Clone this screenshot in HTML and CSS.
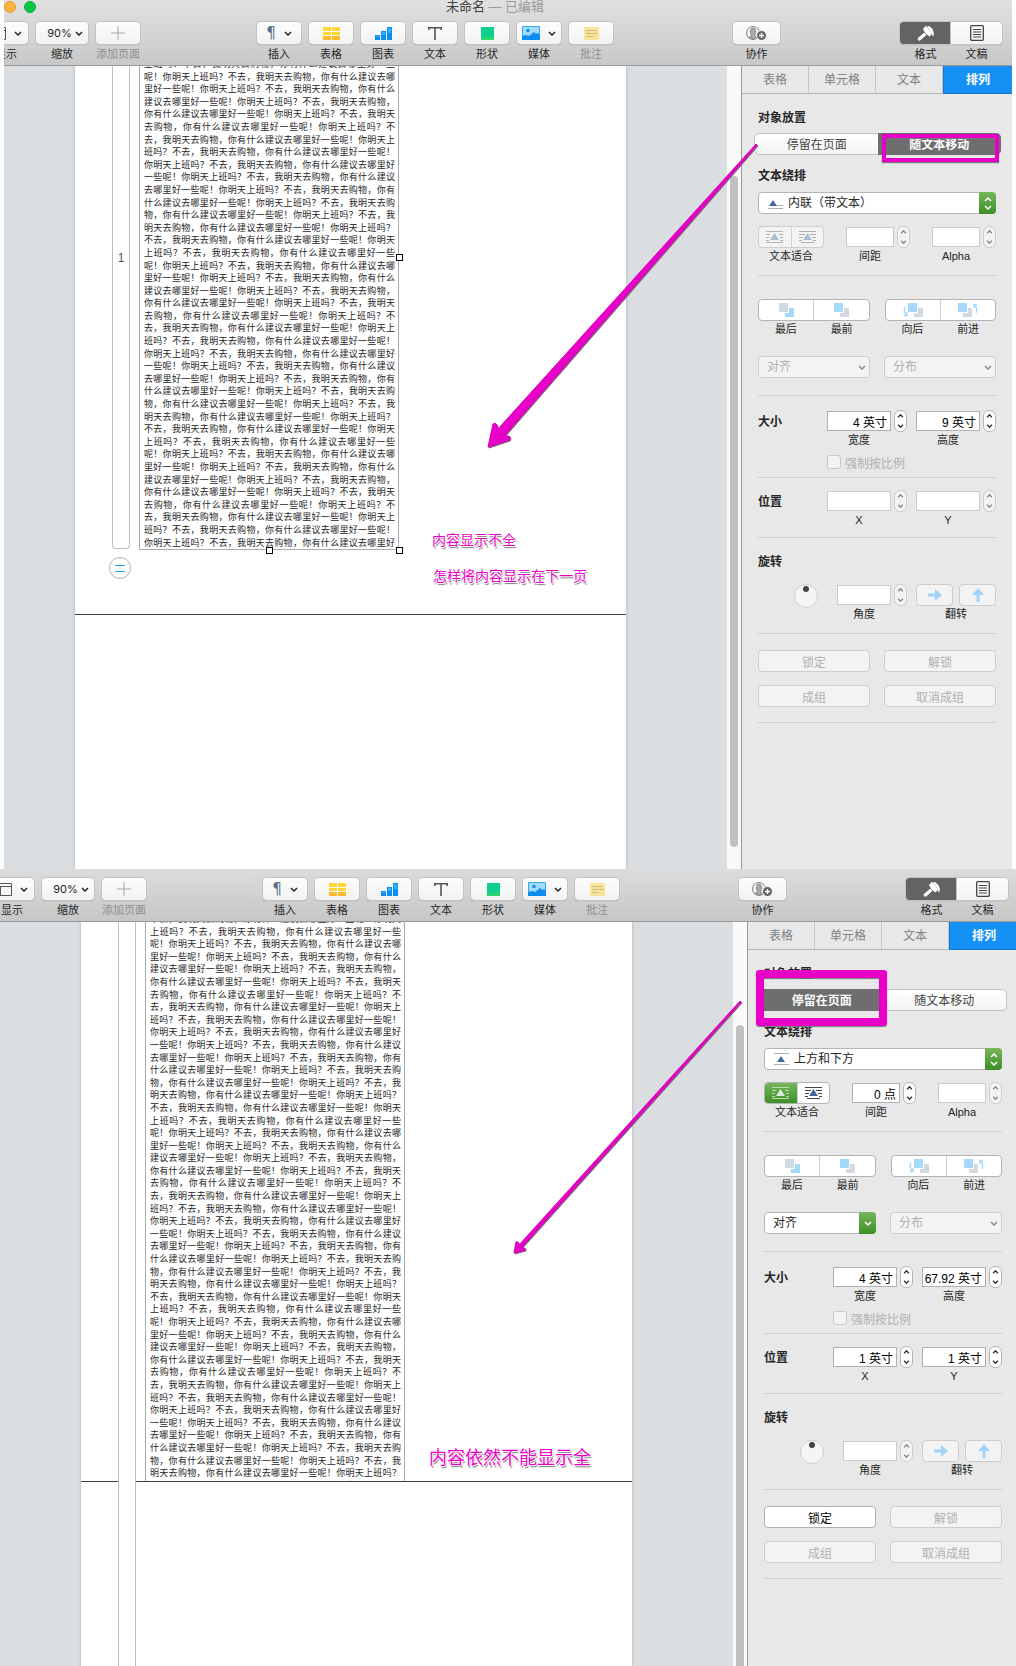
FILE: index.html
```html
<!DOCTYPE html>
<html lang="zh-CN">
<head>
    <meta charset="UTF-8">
    <meta name="viewport" content="width=device-width, initial-scale=1.0">
    <title>未命名</title>
    <link rel="stylesheet" href="styles.css">
</head>
<body>
    <section class="window window-inline">
        <header class="titlebar">
            <span class="light light-min"></span>
            <span class="light light-zoom"></span>
            <h1 class="title">未命名 <span>— 已编辑</span></h1>
        </header>
        <div class="toolbar"></div>
        <div class="workspace">
            <main class="canvas">
                <div class="sheet">
                    <div class="row-header"><span>1</span></div>
                    <div class="page">
                        <div class="cell">
                            <p class="cell-text" data-start="3"></p>
                            <i class="handle handle-right"></i>
                            <i class="handle handle-bottom"></i>
                            <i class="handle handle-corner"></i>
                        </div>
                    </div>
                    <button class="add-row" aria-label="添加行"></button>
                    <p class="note note-first">内容显示不全</p>
                    <p class="note note-second">怎样将内容显示在下一页</p>
                </div>
            </main>
            <div class="scrollbar"><div class="thumb"></div></div>
            <aside class="inspector" data-mode="inline"></aside>
        </div>
        <svg class="arrow arrow-inline" width="278" height="312" viewBox="484 140 278 312">
            <path d="M756 144L497 430L497 425Q495 422 493 424L488 447L509 440Q511 438 509 436L504 436L757 145Z"/>
        </svg>
    </section>

    <section class="window window-page">
        <div class="toolbar"></div>
        <div class="workspace">
            <main class="canvas">
                <div class="sheet">
                    <div class="row-header"></div>
                    <div class="page">
                        <div class="cell">
                            <p class="cell-text" data-start="7"></p>
                        </div>
                    </div>
                    <p class="note note-large">内容依然不能显示全</p>
                </div>
            </main>
            <div class="scrollbar"><div class="thumb"></div></div>
            <aside class="inspector" data-mode="page"></aside>
        </div>
        <svg class="arrow arrow-page" width="236" height="260" viewBox="510 998 236 260">
            <path d="M740 1001L519 1245L518 1242L516 1242L514 1253L525 1250L525 1248L521 1248L741 1002Z"/>
        </svg>
    </section>

    <script src="script.js"></script>
</body>
</html>
```
FILE: styles.css
```css
* {
    box-sizing: border-box;
}

body {
    margin: 0;
    height: 100vh;
    display: flex;
    flex-direction: column;
    overflow: hidden;
    background: #fff;
    color: #262626;
    font-family: "Liberation Sans", "Noto Sans CJK SC", sans-serif;
    font-size: 12px;
}

h1, h2, p {
    margin: 0;
}

button, input, select {
    font: inherit;
    color: inherit;
    margin: 0;
    padding: 0;
}

svg {
    display: block;
}

.window {
    position: relative;
    display: flex;
    flex-direction: column;
    overflow: hidden;
}

.window-inline {
    flex: 869 1 0;
    margin: 0 4px;
    background: linear-gradient(#e1e1e1, #c8c8c8 65px);
}

.window-page {
    flex: 797 1 0;
    margin-right: -2px;
    background: linear-gradient(#dcdcdc, #c6c6c6 53px);
}

/* title bar */
.titlebar {
    display: flex;
    align-items: center;
    gap: 8px;
    height: 14px;
    margin-bottom: 8px;
}

.light {
    width: 12px;
    height: 12px;
    border-radius: 50%;
}

.light-min {
    background: #fdb43d;
    border: 1px solid #e39c2d;
}

.light-zoom {
    background: #0fc544;
    border: 1px solid #0aa838;
}

.title {
    flex: 1;
    padding-right: 66px;
    text-align: center;
    font-size: 13px;
    font-weight: 400;
    line-height: 14px;
    color: #404040;
}

.title span {
    color: #999;
}

/* toolbar */
.toolbar {
    display: flex;
    padding-right: 10px;
    height: 44px;
    border-bottom: 1px solid #9a9a9a;
}

.window-page .toolbar {
    height: 53px;
    padding-top: 9px;
}

.tool-group {
    display: flex;
    gap: 8px;
}

.tools-view {
    margin-left: -20px;
}

.window-page .tools-view {
    margin-left: -10px;
}

.tools-insert {
    margin-left: 117px;
}

.tools-share {
    margin: 0 auto;
}

.tools-panel {
    gap: 0;
}

.tool {
    display: flex;
    flex-direction: column;
    align-items: center;
    width: 44px;
    padding: 0;
    border: 0;
    background: none;
    font-size: 11px;
    line-height: 14px;
    white-space: nowrap;
}

.tool-face {
    display: flex;
    align-items: center;
    justify-content: center;
    gap: 8px;
    width: 100%;
    height: 22px;
    margin-bottom: 3px;
    background: linear-gradient(#fdfdfd, #f2f2f2);
    border-radius: 4px;
    box-shadow: 0 0 0 1px #c3c3c3, 0 1px 1px #999;
}

.tool-zoom {
    width: 52px;
}

.tool-zoom .tool-face {
    gap: 3px;
    padding-left: 6px;
    font-family: Inter, sans-serif;
    font-size: 11px;
}

.tool-share {
    width: 47px;
}

.tool:disabled {
    color: #8e8e8e;
}

.tool:disabled svg {
    opacity: 0.5;
}

.tools-panel .tool {
    width: 51px;
}

.tools-panel .tool-face {
    border-radius: 0 4px 4px 0;
}

.tools-panel .tool-on .tool-face {
    background: #636363;
    border-radius: 4px 0 0 4px;
}

.pilcrow {
    font-family: "DejaVu Sans", sans-serif;
    font-size: 15px;
    color: #5c7188;
}

/* document */
.workspace {
    flex: 1;
    min-height: 0;
    display: flex;
}

.canvas {
    flex: 1;
    display: flex;
    overflow: hidden;
    padding: 0 101px 0 71px;
    background: #dadee1;
}

.window-page .canvas {
    padding-left: 81px;
}

.sheet {
    position: relative;
    flex: 1;
    background: #fff;
    box-shadow: 0 0 3px #a9adb0;
}

.page {
    display: flex;
    padding: 0 0 64px 64px;
    border-bottom: 1px solid #3c3c3c;
}

.window-page .page {
    padding-bottom: 0;
}

.row-header {
    position: absolute;
    z-index: 1;
    left: 37px;
    top: 0;
    width: 18px;
    height: 483px;
    display: flex;
    align-items: center;
    justify-content: center;
    padding-bottom: 98px;
    border: 1px solid #bdbdbd;
    border-top: 0;
    border-radius: 0 0 4px 4px;
    background: #fff;
    color: #555;
}

.window-page .row-header {
    height: auto;
    bottom: 0;
    border-bottom: 0;
    border-radius: 0;
}

.cell {
    position: relative;
    width: 260px;
    height: 484px;
    padding: 0 3px 0 4px;
    border: 1px solid #ababab;
    border-top: 0;
}

.window-page .cell {
    height: 559px;
    border-bottom: 0;
}

/* scrolled part of a line up under the toolbar */
.cell-text {
    height: calc(100% + 8px);
    margin-top: -8px;
    overflow: hidden;
    font-family: "Noto Sans CJK SC", sans-serif;
    font-size: 9px;
    line-height: 1.4;
    text-align: justify;
    text-spacing-trim: space-all;
}

.window-page .cell-text {
    height: calc(100% + 9px);
    margin-top: -9px;
}

.handle {
    position: absolute;
    width: 7px;
    height: 7px;
    border: 1px solid #000;
    background: #fff;
}

.handle-right {
    right: -5px;
    top: 188px;
}

.handle-bottom {
    left: 126px;
    bottom: -5px;
}

.handle-corner {
    right: -5px;
    bottom: -5px;
}

.add-row {
    position: absolute;
    left: 34px;
    top: 491px;
    width: 22px;
    height: 22px;
    border: 1px solid #b0b0b0;
    border-radius: 50%;
    background: #fff;
}

.add-row::before {
    content: "";
    display: block;
    width: 10px;
    height: 5px;
    margin: 0 auto;
    border: solid #1e9bf5;
    border-width: 1px 0;
}

.scrollbar {
    width: 14px;
    padding: 110px 3px 22px;
    background: #fafafa;
}

.thumb {
    height: 100%;
    border-radius: 4px;
    background: #c1c1c1;
}

.window-page .scrollbar {
    padding-top: 103px;
    padding-bottom: 0;
}

.window-page .thumb {
    border-radius: 4px 4px 0 0;
}

/* inspector */
.inspector {
    width: 271px;
    border-left: 1px solid #999;
    background: #e8e8e8;
}

.tabs {
    display: flex;
    height: 28px;
}

.tab {
    width: 67px;
    padding-bottom: 2px;
    border: 0;
    border-right: 1px solid #c5c8cb;
    border-bottom: 1px solid #b4b7ba;
    background: none;
    color: #7d8285;
}

.tab-on {
    flex: 1;
    border: 1px solid #1179cf;
    border-width: 0 0 1px 1px;
    background: #1590f5;
    color: #fff;
    font-weight: 700;
}

.panel {
    padding: 15px 16px 0;
}

.heading {
    font-size: 12px;
    line-height: 18px;
    font-weight: 700;
}

.segment {
    position: relative;
    display: flex;
    height: 22px;
    margin: 6px -5px 12px -4px;
    border: 1px solid #c4c4c4;
    border-radius: 5px;
    background: linear-gradient(#fff, #f4f4f4);
}

.segment button {
    flex: 1;
    padding-bottom: 2px;
    border: 0;
    background: none;
    color: #444;
}

.segment .segment-on {
    margin: -1px;
    background: #6e6e6e;
    color: #fff;
    font-weight: 700;
}

.segment-on:first-child {
    border-radius: 5px 0 0 5px;
}

.segment-on:last-of-type {
    border-radius: 0 5px 5px 0;
}

.mark {
    position: absolute;
    border: 4px solid #e800c8;
    box-shadow: 0 1px 1px #777, inset 0 1px 1px #777;
}

.mark-inline {
    left: 127px;
    top: 0;
    width: 117px;
    height: 28px;
}

.mark-page {
    left: -5px;
    top: -20px;
    width: 131px;
    height: 56px;
    border-width: 8px;
    border-radius: 3px;
}

.dropdown {
    position: relative;
    display: block;
    height: 22px;
    border: 1px solid #b5b5b5;
    border-radius: 4px;
    background: #fff;
}

.dropdown select {
    appearance: none;
    width: 100%;
    height: 100%;
    padding-left: 8px;
    border: 0;
    background: none;
    opacity: 1;
}

.dropdown-arrow {
    position: absolute;
    right: -1px;
    top: -1px;
    width: 17px;
    height: 22px;
    display: flex;
    align-items: center;
    justify-content: center;
    border-radius: 0 4px 4px 0;
    background: linear-gradient(#78b65c, #3c8f27);
    color: #fff;
    pointer-events: none;
}

.dropdown-off {
    border-color: #cdcdcd;
    background: #f3f3f3;
    color: #b0b0b0;
}

.dropdown-off .dropdown-arrow {
    background: none;
    color: #8c8c8c;
}

.dropdown-wrap {
    margin: 7px 0 12px;
}

.dropdown-wrap select {
    padding-left: 29px;
}

.wrap-icon {
    position: absolute;
    left: 8px;
    top: 3px;
}

.row {
    display: flex;
    align-items: flex-start;
}

.row-fit {
    gap: 22px;
    margin-right: -1px;
}

.caption {
    display: block;
    padding-top: 1px;
    font-size: 11px;
    line-height: 14px;
    text-align: center;
}

.pair {
    display: flex;
    height: 22px;
    border: 1px solid #b3b3b3;
    border-radius: 4px;
    background: #fff;
    overflow: hidden;
}

.pair button {
    flex: 1;
    display: flex;
    align-items: center;
    justify-content: center;
    border: 0;
    background: none;
}

.pair button + button {
    border-left: 1px solid #cfcfcf;
}

.pair-fit {
    width: 66px;
}

.pair-off {
    border-color: #cdcdcd;
    background: #f3f3f3;
}

.pair-off svg {
    opacity: 0.4;
}

.pair .fit-on {
    background: linear-gradient(#78b65c, #3c8f27);
}

.order {
    display: grid;
    grid-template-columns: 1fr 1fr;
    gap: 15px;
}

.captions {
    display: flex;
}

.captions .caption {
    flex: 1;
}

.field {
    display: grid;
    grid-template-columns: 64px 13px;
    column-gap: 3px;
    align-items: center;
}

.field-small {
    grid-template-columns: 48px 13px;
}

.field-angle {
    grid-template-columns: 54px 13px;
}

.field + .field {
    margin-left: 9px;
}

.row-fit .field + .field {
    margin-left: 0;
}

.field input {
    width: 100%;
    height: 20px;
    padding-right: 3px;
    border: 1px solid #b0b0b0;
    background: #fff;
    color: #000;
    text-align: right;
}

.field input:disabled {
    border-color: #cbcbcb;
}

.stepper {
    display: flex;
    flex-direction: column;
    width: 13px;
    height: 22px;
    border: 1px solid #b5b5b5;
    border-radius: 6px;
    background: #fff;
}

.stepper button {
    flex: 1;
    display: flex;
    align-items: center;
    justify-content: center;
    border: 0;
    background: none;
    color: #333;
}

.stepper-off {
    border-color: #cdcdcd;
    background: #f3f3f3;
}

.stepper-off button {
    color: #8a8a8a;
}

.rule {
    height: 1px;
    border: 0;
    margin: 0;
    background: #cfcfcf;
}

.rule-order {
    margin: 12px 0 23px;
}

.rule-size {
    margin-bottom: 14px;
}

.rule-place {
    margin-bottom: 12px;
}

.rule-rotate {
    margin: 10px 0 15px;
}

.row .heading {
    flex: 1;
    padding-top: 3px;
}

.ratio {
    display: flex;
    align-items: center;
    gap: 4px;
    height: 14px;
    margin: 8px 0 8px 69px;
    color: #b0b0b0;
}

.ratio input {
    appearance: none;
    width: 14px;
    height: 14px;
    border: 1px solid #c8c8c8;
    border-radius: 3px;
    background: #f3f3f3;
}

.row-angle {
    justify-content: flex-end;
    margin: 13px 0 12px;
}

.knob {
    width: 24px;
    height: 24px;
    margin-right: 19px;
    border: 1px solid #cdcdcd;
    border-radius: 50%;
    background: #f5f5f5;
}

.knob::before {
    content: "";
    display: block;
    width: 6px;
    height: 6px;
    margin: 1px auto;
    border-radius: 50%;
    background: #444;
}

.flip {
    width: 80px;
    margin-left: 9px;
}

.flip-buttons {
    display: flex;
    gap: 6px;
}

.push {
    flex: 1;
    display: flex;
    align-items: center;
    justify-content: center;
    height: 22px;
    border: 1px solid #b0b0b0;
    border-radius: 4px;
    background: #fff;
    color: #000;
}

.push:disabled {
    border-color: #cdcdcd;
    background: #f3f3f3;
    color: #b0b0b0;
}

.actions {
    display: grid;
    grid-template-columns: 1fr 1fr;
    gap: 13px 14px;
    margin: 16px 0 15px;
}

.actions-align {
    margin: 20px 0 17px;
}

/* annotations */
.note {
    position: absolute;
    color: #ec00cc;
    font-size: 14px;
    line-height: 20px;
    white-space: nowrap;
    text-shadow: -1px 0 #fff, 1px 0 #fff, 0 -1px #fff, 0 1px #fff, 1px 2px 1px #777;
}

.note-first {
    left: 357px;
    top: 464px;
}

.note-second {
    left: 358px;
    top: 500px;
}

.note-large {
    left: 348px;
    top: 524px;
    font-size: 18px;
    line-height: 24px;
}

.arrow {
    position: absolute;
    fill: #e800c8;
    stroke: #dc00be;
    filter: drop-shadow(1px 1px 0 #8c5a84);
}

.arrow-inline {
    right: 250px;
    top: 140px;
}

.arrow-page {
    right: 272px;
    top: 129px;
}
```
FILE: script.js
```js
const sentence = '你明天上班吗？不去，我明天去购物，你有什么建议去哪里好一些呢！';

const icons = {
    down: '<svg width="8" height="5" viewBox="0 0 8 5" fill="none" stroke="currentColor" stroke-width="1.5"><path d="M1 1l3 3 3-3"/></svg>',
    up: '<svg width="7" height="4" viewBox="0 0 8 5" fill="none" stroke="currentColor" stroke-width="1.8"><path d="M1 4l3-3 3 3"/></svg>',
    small: '<svg width="7" height="4" viewBox="0 0 8 5" fill="none" stroke="currentColor" stroke-width="1.8"><path d="M1 1l3 3 3-3"/></svg>',
    updown: '<svg width="8" height="13" viewBox="0 0 8 13" fill="none" stroke="currentColor" stroke-width="1.5"><path d="M1 4l3-3 3 3M1 9l3 3 3-3"/></svg>',
    view: '<svg width="16" height="13" viewBox="0 0 16 13" fill="none" stroke="#555"><path d="M.5.5h15v12H.5zM.5 3.5h15M4.500 3.500v9"/></svg>',
    plus: '<svg width="14" height="14" viewBox="0 0 14 14" stroke="#555"><path d="M7 0v14M0 7h14"/></svg>',
    table: '<svg width="17" height="13" viewBox="0 0 17 13"><path fill="#fdd835" d="M0 0h8v4H0zM9 0h8v4H9zM0 5h8v3H0zM9 5h8v3H9z"/><path fill="#fcbc2a" d="M0 9h8v4H0zM9 9h8v4H9z"/></svg>',
    chart: '<svg width="17" height="13" viewBox="0 0 17 13"><path fill="#0b8df2" d="M0 8h5v5H0zM6 4h5v9H6zM12 0h5v13h-5z"/><path fill="#2cb5fb" d="M1 9h3v1H1zM7 5h3v3H7zM13 1h3v5h-3z"/></svg>',
    text: '<svg width="14" height="13" viewBox="0 0 14 13" fill="none" stroke="#555" stroke-width="1.6"><path d="M.8 3V.8h12.400V3M7 1v12"/></svg>',
    shape: '<svg width="13" height="13" viewBox="0 0 13 13"><path fill="#0fcf8c" d="M0 0h13v13H0z"/><path fill="#2ed573" d="M0 10h13v3H0z"/></svg>',
    media: '<svg width="18" height="14" viewBox="0 0 18 14"><path fill="#9fdcff" stroke="#3aa7f4" d="M.5.5h17v13H.5z"/><circle cx="6" cy="4.500" r="1.700" fill="#0d8cf0"/><path fill="#0d8cf0" d="M0 10l4-1 3 1 5-4 2 2 2-1 2 2v5H0z"/></svg>',
    comment: '<svg width="15" height="13" viewBox="0 0 15 13"><path fill="#ffd23c" d="M0 0h15v13H0z"/><path stroke="#9b7c1c" d="M2 3.500h11M2 6.500h11M2 9.500h7"/></svg>',
    share: '<svg width="21" height="14" viewBox="0 0 21 14"><circle cx="7" cy="7" r="6.400" fill="none" stroke="#777"/><path fill="#aaa" stroke="#777" stroke-width=".7" d="M2.500 11.500L5.500 9.800Q4 7.500 4.300 5Q4.800 2 7 2T9.700 5Q10 7.500 8.500 9.800L11 11.500Q7 14.500 2.500 11.500z"/><circle cx="15.500" cy="9.500" r="5" fill="#666" stroke="#fafafa"/><path stroke="#fff" stroke-width="1.300" d="M15.500 7v5M13 9.500h5"/></svg>',
    brush: '<svg width="18" height="16" viewBox="0 0 18 16" fill="#fff"><path d="M6 4L9 .8l6.200 7.700-2.600 2.900L9.800 9.600 4 14.800Q2 16.500 1 14.800T2.200 12L7.700 7.200z"/><path d="M10 1.500l2-.5 3.500 3Q17.500 8 16.500 11l-1 .2-.5-2.700z"/><path d="M5 5l5.500 5.500" stroke="#636363" stroke-width=".8"/></svg>',
    page: '<svg width="14" height="16" viewBox="0 0 14 16" fill="none" stroke="#444"><rect x=".7" y=".7" width="12.600" height="14.600" rx="1" stroke-width="1.300"/><path d="M3 4.500h8M3 7h8M3 9.500h8M3 12h8"/></svg>',
    inline: '<svg class="wrap-icon" width="17" height="14" viewBox="0 0 17 14"><path fill="#44689e" d="M2 10l4-6 4 6z"/><path stroke="#a9b0b8" d="M10 9.500h6M1 12.500h15"/></svg>',
    above: '<svg class="wrap-icon" width="17" height="14" viewBox="0 0 17 14"><path fill="#44689e" d="M4 10l4-6 4 6z"/><path stroke="#a9b0b8" d="M1 1.500h15M1 12.500h15"/></svg>',
    fitBox: '<svg width="19" height="14" viewBox="0 0 19 14"><path fill="#fff" fill-opacity=".8" d="M5 10l4.500-7 4.500 7z"/><path stroke="#b9dcaa" d="M1 1.500h17M1 4.500h4M14 4.500h4M1 7.500h3M15 7.500h3M1 10.500h3M15 10.500h3M1 12.500h17"/></svg>',
    fitBoxOff: '<svg width="19" height="14" viewBox="0 0 19 14"><path fill="#44689e" d="M5 10l4.500-7 4.500 7z"/><path stroke="#555" d="M1 1.500h17M1 4.500h4M14 4.500h4M1 7.500h3M15 7.500h3M1 10.500h3M15 10.500h3M1 12.500h17"/></svg>',
    fitTight: '<svg width="19" height="14" viewBox="0 0 19 14"><path fill="#44689e" d="M5 10l4.500-7 4.500 7z"/><path stroke="#444" d="M1 1.500h17M1 4.500h6M12 4.500h6M1 7.500h4M14 7.500h4M1 10.500h3M15 10.500h3M3 12.500h13"/></svg>',
    back: '<svg width="15" height="14" viewBox="0 0 15 14"><path fill="#a5d8fb" d="M6 5h9v9H6z"/><path fill="#d3d9e1" stroke="#fff" d="M-.5-.500h10v10h-10z"/></svg>',
    front: '<svg width="15" height="14" viewBox="0 0 15 14"><path fill="#d3d9e1" d="M6 5h9v9H6z"/><path fill="#a5d8fb" stroke="#fff" d="M-.5-.500h10v10h-10z"/></svg>',
    backward: '<svg width="20" height="14" viewBox="0 0 20 14"><path fill="#d3d9e1" d="M11 5h9v9h-9z"/><path fill="#a5d8fb" stroke="#fff" d="M4.500-.500h10v10h-10z"/><path fill="none" stroke="#a5d8fb" stroke-width="1.300" d="M2 4Q0 9 3.500 12M4 9v3.500H1"/></svg>',
    forward: '<svg width="20" height="14" viewBox="0 0 20 14"><path fill="#d3d9e1" d="M5 5h9v9H5z"/><path fill="#a5d8fb" stroke="#fff" d="M-.5-.500h10v10h-10z"/><path fill="none" stroke="#a5d8fb" stroke-width="1.300" d="M18 10Q20 5 16.500 2M16 5V1.500h3"/></svg>',
    right: '<svg width="14" height="12" viewBox="0 0 14 12"><path fill="#a0d3f7" d="M0 4.500h7V0l7 6-7 6V7.500H0z"/></svg>',
    top: '<svg width="12" height="14" viewBox="0 0 12 14"><path fill="#a0d3f7" d="M4.500 14V7H0l6-7 6 7H7.500v7z"/></svg>'
};

function tool(label, face, extra = '', attrs = '') {
    return `<button class="tool ${extra}" ${attrs}><span class="tool-face">${face}</span>${label}</button>`;
}

function toolbar() {
    return `
        <div class="tool-group tools-view">
            ${tool('显示', icons.view + icons.down)}
            ${tool('缩放', '90%' + icons.down, 'tool-zoom')}
            ${tool('添加页面', icons.plus, '', 'disabled')}
        </div>
        <div class="tool-group tools-insert">
            ${tool('插入', '<span class="pilcrow">¶</span>' + icons.down)}
            ${tool('表格', icons.table)}
            ${tool('图表', icons.chart)}
            ${tool('文本', icons.text)}
            ${tool('形状', icons.shape)}
            ${tool('媒体', icons.media + icons.down)}
            ${tool('批注', icons.comment, '', 'disabled')}
        </div>
        <div class="tool-group tools-share">${tool('协作', icons.share, 'tool-share')}</div>
        <div class="tool-group tools-panel">
            ${tool('格式', icons.brush, 'tool-on')}
            ${tool('文稿', icons.page)}
        </div>`;
}

function field(mode, name, label, value, extra = '') {
    const off = value ? '' : 'disabled';
    const id = `${mode}-${name}`;
    return `
        <div class="field ${extra}">
            <input type="text" id="${id}" value="${value}" ${off}>
            <span class="stepper ${value ? '' : 'stepper-off'}">
                <button aria-label="增加" ${off}>${icons.up}</button>
                <button aria-label="减少" ${off}>${icons.small}</button>
            </span>
            <label class="caption" for="${id}">${label}</label>
        </div>`;
}

function dropdown(label, on) {
    return `
        <span class="dropdown ${on ? '' : 'dropdown-off'}">
            <select aria-label="${label}" ${on ? '' : 'disabled'}><option>${label}</option></select>
            <span class="dropdown-arrow">${icons.down}</span>
        </span>`;
}

function inspector(mode) {
    const page = mode === 'page';
    return `
        <nav class="tabs">
            <button class="tab">表格</button>
            <button class="tab">单元格</button>
            <button class="tab">文本</button>
            <button class="tab tab-on">排列</button>
        </nav>
        <div class="panel">
            <h2 class="heading">对象放置</h2>
            <div class="segment">
                <button class="${page ? 'segment-on' : ''}">停留在页面</button>
                <button class="${page ? '' : 'segment-on'}">随文本移动</button>
                <span class="mark mark-${mode}"></span>
            </div>
            <h2 class="heading">文本绕排</h2>
            <span class="dropdown dropdown-wrap">
                ${page ? icons.above : icons.inline}
                <select aria-label="文本绕排"><option>${page ? '上方和下方' : '内联（带文本）'}</option></select>
                <span class="dropdown-arrow">${icons.updown}</span>
            </span>
            <div class="row row-fit">
                <div>
                    <div class="pair pair-fit ${page ? '' : 'pair-off'}">
                        <button class="${page ? 'fit-on' : ''}" aria-label="矩形">${page ? icons.fitBox : icons.fitBoxOff}</button>
                        <button aria-label="轮廓">${icons.fitTight}</button>
                    </div>
                    <span class="caption">文本适合</span>
                </div>
                ${field(mode, 'spacing', '间距', page ? '0 点' : '', 'field-small')}
                ${field(mode, 'alpha', 'Alpha', '', 'field-small')}
            </div>
            <hr class="rule rule-order">
            <div class="order">
                <div>
                    <div class="pair">
                        <button aria-label="最后">${icons.back}</button>
                        <button aria-label="最前">${icons.front}</button>
                    </div>
                    <div class="captions"><span class="caption">最后</span><span class="caption">最前</span></div>
                </div>
                <div>
                    <div class="pair">
                        <button aria-label="向后">${icons.backward}</button>
                        <button aria-label="前进">${icons.forward}</button>
                    </div>
                    <div class="captions"><span class="caption">向后</span><span class="caption">前进</span></div>
                </div>
            </div>
            <div class="actions actions-align">${dropdown('对齐', page)}${dropdown('分布', false)}</div>
            <hr class="rule rule-size">
            <div class="row">
                <h2 class="heading">大小</h2>
                ${field(mode, 'width', '宽度', '4 英寸')}
                ${field(mode, 'height', '高度', page ? '67.92 英寸' : '9 英寸')}
            </div>
            <label class="ratio"><input type="checkbox" disabled>强制按比例</label>
            <hr class="rule rule-place">
            <div class="row">
                <h2 class="heading">位置</h2>
                ${field(mode, 'x', 'X', page ? '1 英寸' : '')}
                ${field(mode, 'y', 'Y', page ? '1 英寸' : '')}
            </div>
            <hr class="rule rule-rotate">
            <h2 class="heading">旋转</h2>
            <div class="row row-angle">
                <span class="knob"></span>
                ${field(mode, 'angle', '角度', '', 'field-angle')}
                <div class="flip">
                    <div class="flip-buttons">
                        <button class="push" aria-label="水平翻转" disabled>${icons.right}</button>
                        <button class="push" aria-label="垂直翻转" disabled>${icons.top}</button>
                    </div>
                    <span class="caption">翻转</span>
                </div>
            </div>
            <hr class="rule">
            <div class="actions">
                <button class="push" ${page ? '' : 'disabled'}>锁定</button>
                <button class="push" disabled>解锁</button>
                <button class="push" disabled>成组</button>
                <button class="push" disabled>取消成组</button>
            </div>
            <hr class="rule">
        </div>`;
}

document.querySelectorAll('.toolbar').forEach(el => {
    el.innerHTML = toolbar();
});

document.querySelectorAll('.inspector').forEach(el => {
    el.innerHTML = inspector(el.dataset.mode);
});

// the cell holds the same sentence over and over, scrolled part way in
document.querySelectorAll('.cell-text').forEach(el => {
    el.textContent = sentence.repeat(45).slice(Number(el.dataset.start));
});
```
